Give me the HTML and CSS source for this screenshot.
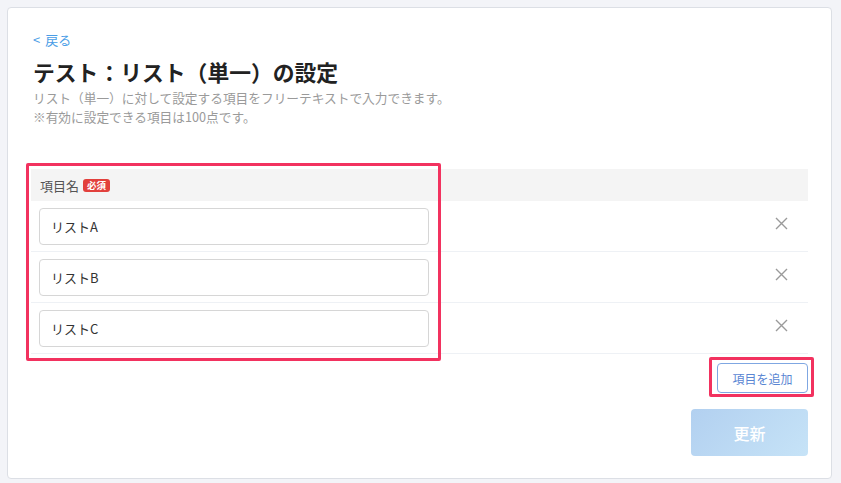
FILE: index.html
```html
<!DOCTYPE html>
<html lang="ja">
<head>
    <meta charset="UTF-8">
    <meta name="viewport" content="width=device-width, initial-scale=1.0">
    <title>リスト（単一）の設定</title>
    <link rel="stylesheet" href="styles.css">
</head>
<body>
    <div class="card">
        <div class="page-head">
            <a class="back-link" href="#">&lt; 戻る</a>
            <h1>テスト：リスト（単一）の設定</h1>
            <p class="desc">リスト（単一）に対して設定する項目をフリーテキストで入力できます。<br>※有効に設定できる項目は100点です。</p>
        </div>

        <div class="item-table">
            <div class="table-head">
                <span>項目名</span>
                <span class="badge">必須</span>
            </div>
            <div class="item-row">
                <input class="item-input" type="text" value="リストA">
                <button class="remove-btn" type="button" aria-label="削除">
                    <svg width="13" height="13" viewBox="0 0 13 13"><path d="M1 1L12 12M12 1L1 12" /></svg>
                </button>
            </div>
            <div class="item-row">
                <input class="item-input" type="text" value="リストB">
                <button class="remove-btn" type="button" aria-label="削除">
                    <svg width="13" height="13" viewBox="0 0 13 13"><path d="M1 1L12 12M12 1L1 12" /></svg>
                </button>
            </div>
            <div class="item-row">
                <input class="item-input" type="text" value="リストC">
                <button class="remove-btn" type="button" aria-label="削除">
                    <svg width="13" height="13" viewBox="0 0 13 13"><path d="M1 1L12 12M12 1L1 12" /></svg>
                </button>
            </div>
            <div class="mark mark-table"></div>
        </div>

        <div class="add-row">
            <button class="add-btn" type="button">項目を追加</button>
        </div>

        <div class="submit-row">
            <button class="submit-btn" type="button" disabled>更新</button>
        </div>
    </div>
</body>
</html>
```

FILE: styles.css
```css
/* base */
body {
    margin: 0;
    padding: 7px;
    background-color: #f3f4f8;
    font-family: "Noto Sans CJK JP", "Noto Sans", sans-serif;
    color: #333;
}

.card {
    width: 825px;
    height: 472px;
    box-sizing: border-box;
    padding: 0 23px;
    background-color: #fff;
    border: 1px solid #dcdfe5;
    border-radius: 4px;
}

/* heading block */
.page-head {
    padding: 22px 0 0 2px;
}

.back-link {
    display: block;
    font-size: 13px;
    line-height: 20px;
    color: #4a9de6;
    text-decoration: none;
    word-spacing: 2px;
}

h1 {
    margin: 7px 0 0;
    font-size: 21.8px;
    line-height: 30px;
    font-weight: bold;
    color: #222;
}

.desc {
    margin: 1px 0 0;
    font-size: 12.7px;
    line-height: 19px;
    color: #9a9a9a;
}

/* item table */
.item-table {
    position: relative;
    margin-top: 43px;
}

.table-head {
    display: flex;
    align-items: center;
    gap: 4px;
    height: 32px;
    padding-left: 9px;
    background-color: #f4f4f4;
    font-size: 13px;
    color: #555;
}

.badge {
    padding: 0 4px;
    font-size: 9.5px;
    line-height: 13px;
    font-weight: bold;
    color: #fff;
    background-color: #e2403c;
    border-radius: 3px;
}

.item-row {
    display: flex;
    align-items: center;
    justify-content: space-between;
    height: 51px;
    box-sizing: border-box;
    padding: 0 20px 0 8px;
    border-bottom: 1px solid #eef1f5;
}

.item-input {
    width: 390px;
    height: 37px;
    box-sizing: border-box;
    padding: 0 11px;
    border: 1px solid #d6d6d6;
    border-radius: 4px;
    font-family: inherit;
    font-size: 13px;
    color: #333;
}

.remove-btn {
    display: flex;
    margin-bottom: 5px;
    padding: 0;
    border: none;
    background: none;
}

.remove-btn path {
    stroke: #9a9a9a;
    stroke-width: 1.4;
    fill: none;
}

/* red highlight frames */
.mark {
    position: absolute;
    border: 3px solid #f2325f;
    border-radius: 2px;
    pointer-events: none;
}

.mark-table {
    left: -5px;
    top: -6px;
    width: 409px;
    height: 192px;
}

/* buttons */
.add-row {
    display: flex;
    justify-content: flex-end;
    margin-top: 9px;
}

.add-btn {
    position: relative;
    width: 91px;
    height: 30px;
    padding: 0;
    background-color: #fff;
    border: 1px solid #7fa7e2;
    border-radius: 4px;
    font-family: inherit;
    font-size: 12px;
    color: #5a86d3;
}

.add-btn::after {
    content: "";
    position: absolute;
    left: -9px;
    top: -7px;
    width: 99px;
    height: 34px;
    border: 3px solid #f2325f;
    border-radius: 2px;
}

.submit-row {
    display: flex;
    justify-content: flex-end;
    margin-top: 16px;
}

.submit-btn {
    width: 117px;
    height: 47px;
    border: none;
    border-radius: 4px;
    background: linear-gradient(135deg, #b2d0f0, #c6e3f7);
    font-family: inherit;
    font-size: 16px;
    font-weight: 500;
    color: #fff;
}
```
